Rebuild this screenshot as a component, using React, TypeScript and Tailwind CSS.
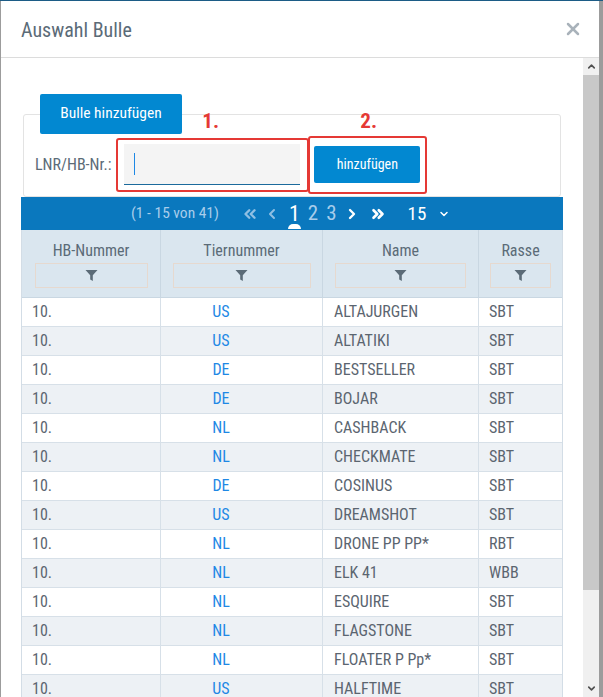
import React from "react";
import { ChevronsLeft, ChevronLeft, ChevronRight, ChevronsRight, ChevronDown, ChevronUp, X } from "lucide-react";

const FONT = "'Roboto Condensed', 'Liberation Sans Narrow', Roboto, sans-serif";

const rows: [string, string, string][] = [
  ["US", "ALTAJURGEN", "SBT"],
  ["US", "ALTATIKI", "SBT"],
  ["DE", "BESTSELLER", "SBT"],
  ["DE", "BOJAR", "SBT"],
  ["NL", "CASHBACK", "SBT"],
  ["NL", "CHECKMATE", "SBT"],
  ["DE", "COSINUS", "SBT"],
  ["US", "DREAMSHOT", "SBT"],
  ["NL", "DRONE PP PP*", "RBT"],
  ["NL", "ELK 41", "WBB"],
  ["NL", "ESQUIRE", "SBT"],
  ["NL", "FLAGSTONE", "SBT"],
  ["NL", "FLOATER P Pp*", "SBT"],
  ["US", "HALFTIME", "SBT"],
];

const Funnel = () => (
  <svg width="13" height="13" viewBox="0 0 13 13">
    <path d="M0.5 1 H12.5 L7.8 6.2 V12 L5.2 10.6 V6.2 Z" fill="#5b6b77" />
  </svg>
);

const HeadCell = ({ label, boxClass, last }: { label: string; boxClass: string; last?: boolean }) => (
  <div className={`flex flex-col items-center pt-[11px] ${last ? "" : "border-r border-[#c9d7e2]"}`}>
    <div className="text-[16px] leading-[20px] text-[#5b6b77]">{label}</div>
    <div className={`mt-[2px] h-[25px] border border-[#e6d9cf] flex items-center justify-center ${boxClass}`}>
      <Funnel />
    </div>
  </div>
);

export default function App() {
  return (
    <div className="w-[603px] h-[697px] overflow-hidden bg-[#9c9c9c] border-t border-[#1c5c86]" style={{ fontFamily: FONT }}>
      <div className="ml-[1px] w-[598px] h-full bg-white flex flex-col">
        {/* header */}
        <div className="h-[57px] shrink-0 border-b border-[#dcdcdc] flex items-center justify-between pl-[20px] pr-[16px]">
          <h2 className="text-[20px] text-[#5b6b77] pt-[2px]">Auswahl Bulle</h2>
          <X size={20} strokeWidth={3} color="#a9b2ba" />
        </div>

        {/* body */}
        <div className="flex flex-1 min-h-0">
          <div className="flex-1 pl-[20px] pr-[20px] pt-[36px] overflow-hidden">
            {/* add panel */}
            <div className="mx-[2px] mt-[20px] border border-[#e3e3e3] rounded-[3px] h-[83px]">
              <button className="block -mt-[21px] ml-[16px] h-[40px] w-[142px] bg-[#0288d1] text-white text-[15.5px] rounded-[2px]">
                Bulle hinzufügen
              </button>
              <div className="flex items-center pl-[11px] h-[61px]">
                <span className="text-[16px] text-[#5b6b77] mr-[5px]">LNR/HB-Nr.:</span>
                <div className="relative border-[2.5px] border-[#e53935] rounded-[3px] w-[193px] h-[54px] pl-[5.5px] pt-[4.5px]">
                  <span className="absolute -top-[29px] left-[84px] text-[21px] leading-none font-bold text-[#e53935]">1.</span>
                  <div className="w-[176px] h-[41px] bg-[#f4f4f4] border-b-[1.5px] border-[#1b6a9c] flex items-center pl-[10px]">
                    <div className="w-[1px] h-[22px] bg-[#1e88e5]" />
                  </div>
                </div>
                <div className="relative border-[2.5px] border-[#e53935] rounded-[3px] w-[119px] h-[58px] ml-[-1px] pl-[4px] pt-[8.5px]">
                  <span className="absolute -top-[27px] left-[50px] text-[21px] leading-none font-bold text-[#e53935]">2.</span>
                  <button className="block w-[106px] h-[37px] bg-[#0288d1] text-white text-[14px] rounded-[2px]">hinzufügen</button>
                </div>
              </div>
            </div>

            {/* pager */}
            <div className="relative h-[33px] bg-[#0a78be] flex items-center text-[#a8cdeb]">
              <span className="ml-[110px] text-[15.5px]">(1 - 15 von 41)</span>
              <ChevronsLeft className="ml-[22px]" size={18} strokeWidth={3.2} color="#8fbfe3" />
              <ChevronLeft className="ml-[5px]" size={16} strokeWidth={3} color="#8fbfe3" />
              <span className="ml-[9px] text-[22px] text-white leading-none relative">
                1
                <span className="absolute left-[-1px] top-[21px] w-[13px] h-[5px] rounded-t-full bg-white" />
              </span>
              <span className="ml-[8px] text-[21px] text-[#a8cdeb] leading-none">2</span>
              <span className="ml-[8px] text-[21px] text-[#a8cdeb] leading-none">3</span>
              <ChevronRight className="ml-[7px]" size={16} strokeWidth={3.5} color="#ffffff" />
              <ChevronsRight className="ml-[9px]" size={18} strokeWidth={3.5} color="#ffffff" />
              <span className="ml-[21px] text-[19px] text-white leading-none">15</span>
              <ChevronDown className="ml-[12px]" size={12} strokeWidth={3} color="#ffffff" />
            </div>

            {/* table */}
            <div className="border-l border-r border-[#d3dde6]">
              <div className="grid grid-cols-[139px_162px_156px_1fr] h-[68px] bg-[#dae6ef] border-b border-[#c9d7e2]">
                <HeadCell label="HB-Nummer" boxClass="w-[113px]" />
                <HeadCell label="Tiernummer" boxClass="w-[138px]" />
                <HeadCell label="Name" boxClass="w-[131px]" />
                <HeadCell label="Rasse" boxClass="w-[61px]" last />
              </div>
              {rows.map(([cc, name, breed], i) => (
                <div
                  key={i}
                  className={`grid grid-cols-[139px_162px_156px_1fr] h-[29px] border-b border-[#d7e0e8] text-[16px] text-[#5b6570] ${
                    i % 2 === 0 ? "bg-white" : "bg-[#edf1f5]"
                  }`}
                >
                  <div className="flex items-center pl-[10px] border-r border-[#d7e0e8]">10.</div>
                  <div className="flex items-center border-r border-[#d7e0e8]">
                    <span className="w-[120px] text-center text-[#1e88e5]">{cc}</span>
                  </div>
                  <div className="flex items-center pl-[11px] border-r border-[#d7e0e8]">{name}</div>
                  <div className="flex items-center pl-[10px]">{breed}</div>
                </div>
              ))}
            </div>
          </div>

          {/* scrollbar */}
          <div className="w-[16px] shrink-0 bg-[#f0f0f0] flex flex-col">
            <div className="h-[17px] flex items-center justify-center">
              <ChevronUp size={11} strokeWidth={3.5} color="#505050" />
            </div>
            <div className="h-[515px] bg-[#c8c8c8]" />
            <div className="flex-1" />
            <div className="h-[17px] flex items-center justify-center">
              <ChevronDown size={11} strokeWidth={3.5} color="#505050" />
            </div>
          </div>
        </div>
      </div>
    </div>
  );
}
